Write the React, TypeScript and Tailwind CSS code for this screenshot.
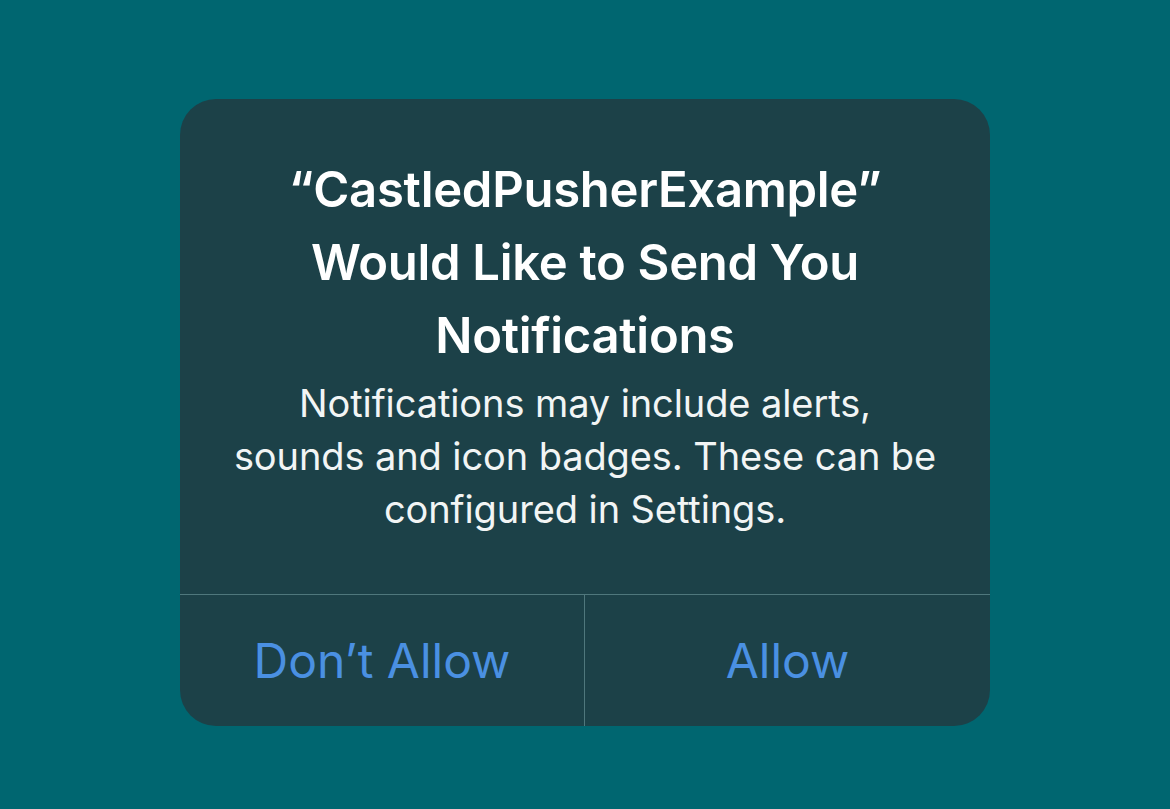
export default function App() {
  return (
    <div className="flex h-[809px] w-[1170px] items-start justify-center bg-[#006670] pt-[99px] font-['Inter',sans-serif]">
      <div className="flex h-[627px] w-[810px] flex-col overflow-hidden rounded-[36px] bg-[#1c4148] text-white">
        <div className="flex flex-1 flex-col items-center px-6 pt-[54px] text-center">
          <h1 className="text-[49px] font-semibold leading-[73px] tracking-[-0.3px]">
            “CastledPusherExample”
            <br />
            Would Like to Send You
            <br />
            Notifications
          </h1>
          <p className="mt-[5px] text-[38px] leading-[53px] tracking-[-0.1px] text-[#f2f5f5]">
            Notifications may include alerts,
            <br />
            sounds and icon badges. These can be
            <br />
            configured in Settings.
          </p>
        </div>
        <div className="grid h-[132px] grid-cols-2 border-t border-[#4f777c]">
          <button className="flex items-center justify-center border-r border-[#4f777c] text-[48px] text-[#4a90e2]">
            Don’t Allow
          </button>
          <button className="flex items-center justify-center text-[48px] text-[#4a90e2]">Allow</button>
        </div>
      </div>
    </div>
  );
}
